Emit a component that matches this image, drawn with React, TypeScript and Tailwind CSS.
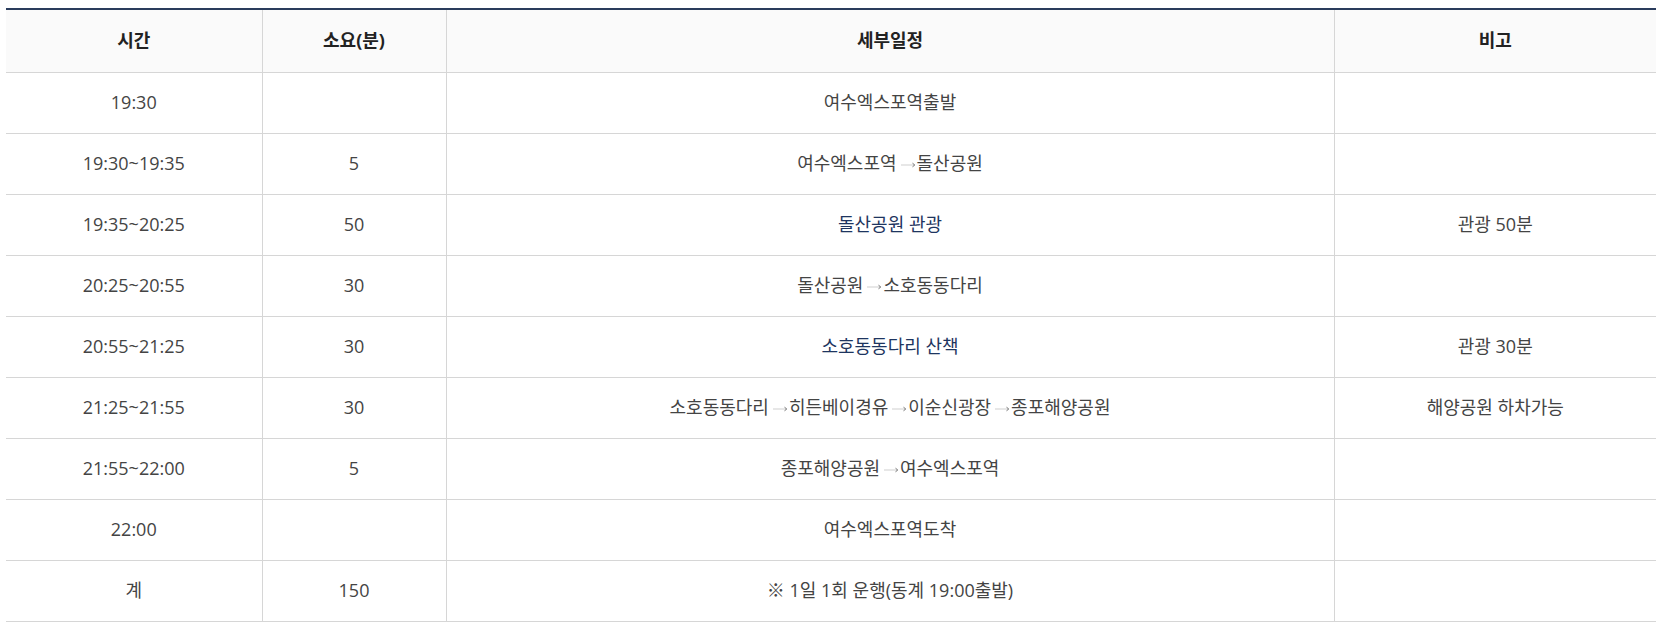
import React from 'react';

type Row = {
  time: string;
  mins: string;
  detail: string | string[];
  navy?: boolean;
  note: string;
};

const rows: Row[] = [
  { time: '19:30', mins: '', detail: '여수엑스포역출발', note: '' },
  { time: '19:30~19:35', mins: '5', detail: ['여수엑스포역', '돌산공원'], note: '' },
  { time: '19:35~20:25', mins: '50', detail: '돌산공원 관광', navy: true, note: '관광 50분' },
  { time: '20:25~20:55', mins: '30', detail: ['돌산공원', '소호동동다리'], note: '' },
  { time: '20:55~21:25', mins: '30', detail: '소호동동다리 산책', navy: true, note: '관광 30분' },
  {
    time: '21:25~21:55',
    mins: '30',
    detail: ['소호동동다리', '히든베이경유', '이순신광장', '종포해양공원'],
    note: '해양공원 하차가능'
  },
  { time: '21:55~22:00', mins: '5', detail: ['종포해양공원', '여수엑스포역'], note: '' },
  { time: '22:00', mins: '', detail: '여수엑스포역도착', note: '' },
  { time: '계', mins: '150', detail: '※ 1일 1회 운행(동계 19:00출발)', note: '' }
];

function Arrow() {
  return (
    <svg width="20" height="10" viewBox="0 0 20 10" className="inline-block align-middle">
      <line x1="4" y1="5" x2="17" y2="5" stroke="#cfcfcf" strokeWidth="1" />
      <path d="M15.5 3.2 L17.8 5 L15.5 6.8" fill="none" stroke="#777" strokeWidth="1" />
    </svg>
  );
}

function Detail({ value }: { value: string | string[] }) {
  if (typeof value === 'string') return <>{value}</>;
  return (
    <>
      {value.map((v, i) => (
        <React.Fragment key={i}>
          {i > 0 && <Arrow />}
          {v}
        </React.Fragment>
      ))}
    </>
  );
}

export default function App() {
  const font = { fontFamily: '"Open Sans", "Noto Sans CJK KR", sans-serif' };
  return (
    <div className="bg-white w-[1662px] h-[627px] px-[6px] pt-[8px]" style={font}>
      <table className="w-full border-collapse table-fixed text-[18px] text-[#444]">
        <colgroup>
          <col className="w-[256px]" />
          <col className="w-[184px]" />
          <col className="w-[888px]" />
          <col />
        </colgroup>
        <thead>
          <tr className="h-[63px] bg-[#fafafa] border-t-2 border-[#2a3c5c]">
            <th className="font-bold text-[#222] border-b border-r border-[#d6d6d6]">시간</th>
            <th className="font-bold text-[#222] border-b border-r border-[#d6d6d6]">소요(분)</th>
            <th className="font-bold text-[#222] border-b border-r border-[#d6d6d6]">세부일정</th>
            <th className="font-bold text-[#222] border-b border-[#d6d6d6]">비고</th>
          </tr>
        </thead>
        <tbody>
          {rows.map((r, i) => (
            <tr key={i} className="h-[61px]">
              <td className="text-center border-b border-r border-[#d6d6d6]">{r.time}</td>
              <td className="text-center border-b border-r border-[#d6d6d6]">{r.mins}</td>
              <td className={`text-center border-b border-r border-[#d6d6d6] ${r.navy ? 'text-[#1e3560]' : ''}`}>
                <Detail value={r.detail} />
              </td>
              <td className="text-center border-b border-[#d6d6d6]">{r.note}</td>
            </tr>
          ))}
        </tbody>
      </table>
    </div>
  );
}
